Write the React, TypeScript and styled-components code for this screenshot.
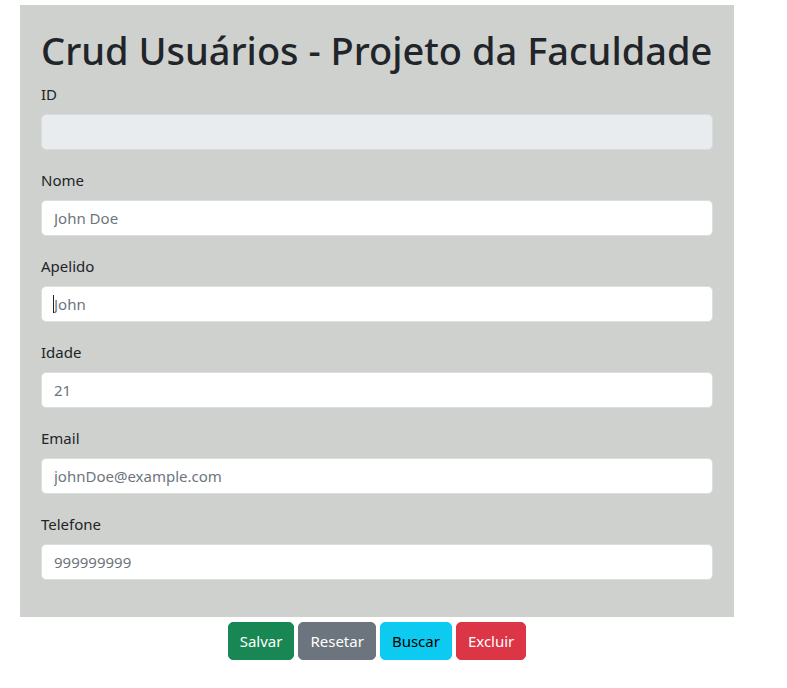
import styled, { createGlobalStyle } from "styled-components";

const GlobalStyle = createGlobalStyle`
  body {
    margin: 0;
    font-family: "Noto Sans", "Open Sans", sans-serif;
    color: #212529;
    background: #ffffff;
  }
  * {
    box-sizing: border-box;
  }
`;

const Page = styled.div`
  width: 714px;
  margin: 5px 0 0 20px;
`;

const Panel = styled.div`
  background-color: #cfd1ce;
  padding: 21px 21px 37px;
`;

const Title = styled.h1`
  margin: 0 0 8px;
  font-size: 38px;
  line-height: 48px;
  font-weight: 500;
  white-space: nowrap;
`;

const Field = styled.div<{ $last?: boolean }>`
  margin-bottom: ${(p) => (p.$last ? "0" : "18px")};
`;

const Label = styled.label`
  display: block;
  font-size: 15px;
  line-height: 24px;
  margin-bottom: 8px;
`;

const InputWrap = styled.div`
  position: relative;
`;

const Input = styled.input<{ $disabled?: boolean }>`
  display: block;
  width: 100%;
  height: 36px;
  padding: 6px 12px;
  font-family: inherit;
  font-size: 15px;
  color: #212529;
  background-color: ${(p) => (p.$disabled ? "#e9ecef" : "#ffffff")};
  border: 1px solid ${(p) => (p.$disabled ? "#d9dcdf" : "#dcdfe1")};
  border-radius: 5px;
  outline: none;

  &::placeholder {
    color: #6c757d;
  }
`;

const Caret = styled.span`
  position: absolute;
  left: 12px;
  top: 9px;
  width: 1px;
  height: 18px;
  background: #212529;
`;

const ButtonRow = styled.div`
  display: flex;
  justify-content: center;
  gap: 4px;
  margin-top: 5px;
`;

const Button = styled.button<{ $bg: string; $fg: string }>`
  height: 38px;
  padding: 6px 11px;
  font-family: inherit;
  font-size: 15px;
  color: ${(p) => p.$fg};
  background-color: ${(p) => p.$bg};
  border: 1px solid ${(p) => p.$bg};
  border-radius: 5px;
  cursor: pointer;
`;

const fields = [
  { label: "ID", placeholder: "", disabled: true },
  { label: "Nome", placeholder: "John Doe" },
  { label: "Apelido", placeholder: "John", caret: true },
  { label: "Idade", placeholder: "21" },
  { label: "Email", placeholder: "johnDoe@example.com" },
  { label: "Telefone", placeholder: "999999999" },
];

const buttons = [
  { text: "Salvar", bg: "#198754", fg: "#ffffff" },
  { text: "Resetar", bg: "#6c757d", fg: "#ffffff" },
  { text: "Buscar", bg: "#0dcaf0", fg: "#000000" },
  { text: "Excluir", bg: "#dc3545", fg: "#ffffff" },
];

function App() {
  return (
    <Page>
      <GlobalStyle />
      <Panel>
        <Title>Crud Usuários - Projeto da Faculdade</Title>
        {fields.map((f, i) => (
          <Field key={f.label} $last={i === fields.length - 1}>
            <Label>{f.label}</Label>
            <InputWrap>
              <Input $disabled={f.disabled} disabled={f.disabled} placeholder={f.placeholder} />
              {f.caret && <Caret />}
            </InputWrap>
          </Field>
        ))}
      </Panel>
      <ButtonRow>
        {buttons.map((b) => (
          <Button key={b.text} $bg={b.bg} $fg={b.fg}>
            {b.text}
          </Button>
        ))}
      </ButtonRow>
    </Page>
  );
}

export default App;
